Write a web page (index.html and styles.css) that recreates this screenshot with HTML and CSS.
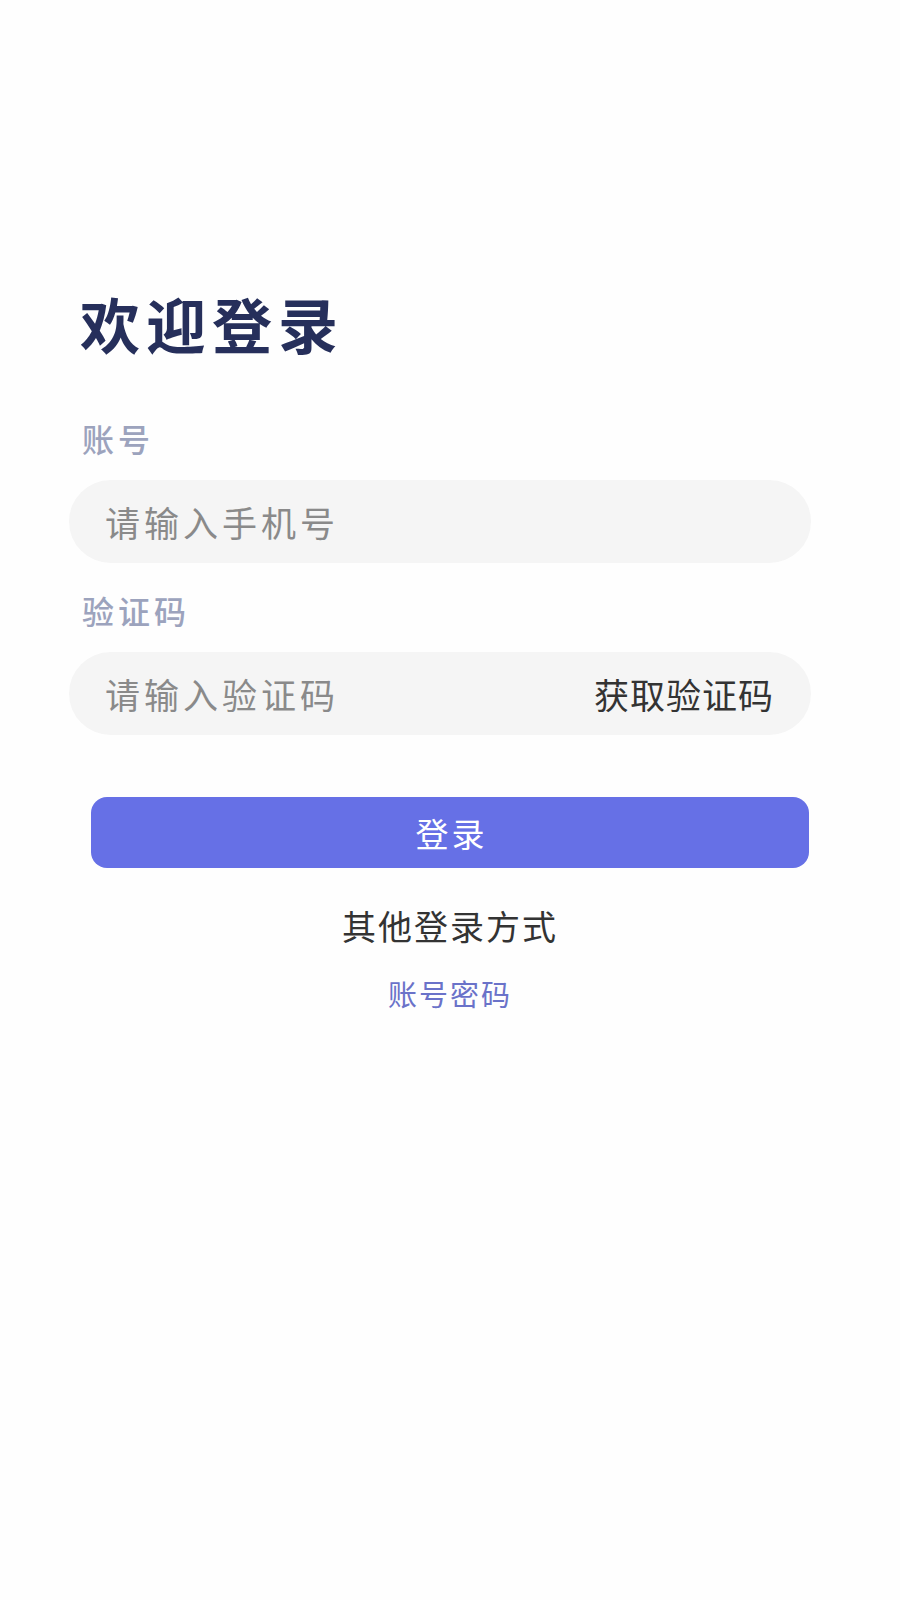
FILE: index.html
```html
<!DOCTYPE html>
<html lang="zh-CN">
<head>
<meta charset="utf-8">
<title>欢迎登录</title>
<link rel="stylesheet" href="styles.css">
</head>
<body>
<main class="page">
  <h1 class="title">欢迎登录</h1>
  <form class="form">
    <label class="label">账号</label>
    <div class="field">
      <span class="placeholder">请输入手机号</span>
    </div>
    <label class="label label-code">验证码</label>
    <div class="field">
      <span class="placeholder">请输入验证码</span>
      <span class="get-code">获取验证码</span>
    </div>
    <button type="button" class="submit">登录</button>
  </form>
  <div class="other">其他登录方式</div>
  <div class="alt-link">账号密码</div>
</main>
</body>
</html>
```

FILE: styles.css
```css
* { box-sizing: border-box; }
html, body {
  margin: 0;
  padding: 0;
  background: #fefefe;
}
body {
  width: 900px;
  min-height: 1600px;
  font-family: "Noto Sans CJK SC", "Noto Sans", sans-serif;
}
.page {
  padding-top: 283px;
  display: flex;
  flex-direction: column;
}
.title {
  margin: 0 0 0 80px;
  font-size: 60px;
  line-height: 80px;
  font-weight: 700;
  letter-spacing: 6px;
  color: #262f5b;
}
.form {
  display: flex;
  flex-direction: column;
  margin-top: 53px;
}
.label {
  margin-left: 82px;
  font-size: 32px;
  line-height: 44px;
  letter-spacing: 4px;
  font-weight: 500;
  color: #9ca3bd;
}
.label-code {
  margin-top: 25px;
}
.field {
  margin: 20px 0 0 69px;
  width: 742px;
  height: 83px;
  border-radius: 42px;
  background: #f5f5f5;
  display: flex;
  align-items: center;
  justify-content: space-between;
  padding: 0 37px 0 36px;
}
.placeholder {
  font-size: 35px;
  letter-spacing: 4px;
  color: #8a8a8a;
}
.get-code {
  font-size: 35px;
  letter-spacing: 1px;
  color: #333333;
}
.submit {
  margin: 62px 0 0 91px;
  width: 718px;
  height: 71px;
  border: none;
  border-radius: 16px;
  background: #6670e6;
  color: #ffffff;
  font-family: inherit;
  font-size: 33px;
  letter-spacing: 3px;
  padding: 0 0 0 3px;
}
.other {
  margin-top: 33px;
  text-align: center;
  font-size: 34px;
  line-height: 50px;
  letter-spacing: 2px;
  color: #333333;
}
.alt-link {
  margin-top: 22px;
  text-align: center;
  font-size: 29px;
  line-height: 40px;
  letter-spacing: 2px;
  color: #6a72c9;
}
```
